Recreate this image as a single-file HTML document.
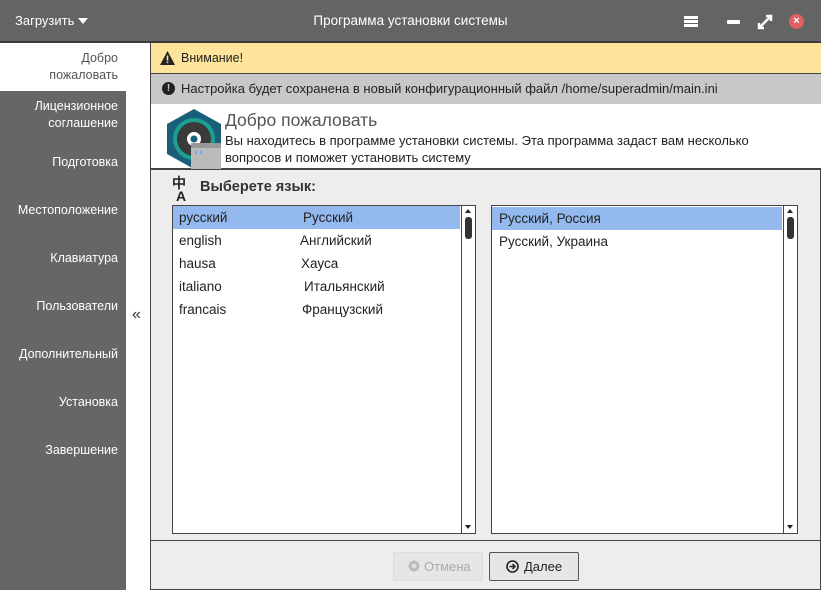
<!DOCTYPE html><html><head><meta charset="utf-8"><style>
*{margin:0;padding:0;box-sizing:border-box}
body{width:821px;height:590px;position:relative;background:#ededed;font-family:"Liberation Sans",sans-serif;font-size:13px;color:#222;overflow:hidden}
.abs{position:absolute}
#title{left:0;top:0;width:821px;height:43px;background:#646464;border-bottom:2px solid #3a3a3a;color:#fff}
#side{left:0;top:43px;width:126px;height:547px;background:#666}
.si{position:absolute;right:8px;width:118px;text-align:right;color:#fff;font-size:12.5px;line-height:17px}
#col{left:126px;top:43px;width:24px;height:547px;background:#fff}
#main{left:150px;top:43px;width:671px;height:547px;border-left:1px solid #444;border-right:1px solid #444;border-bottom:1px solid #444}
.list{background:#fff;border:1px solid #444}
.row{position:absolute;left:0;height:23px;line-height:23px;font-size:13.5px}
.sb{position:absolute;right:0;top:0;bottom:0;width:14px;border-left:1px solid #444;background:#fff}
</style></head><body>
<div id="title" class="abs">
 <div class="abs" style="left:15px;top:13px;font-size:13px">Загрузить</div>
 <div class="abs" style="left:78px;top:18px;border:5px solid transparent;border-top:6px solid #fff;border-bottom:0"></div>
 <div class="abs" style="left:0;width:821px;top:13px;text-align:center;font-size:13.5px">Программа установки системы</div>
 <div class="abs" style="left:684px;top:16px;width:14px;height:3px;background:#fff;box-shadow:0 4px 0 #fff,0 8px 0 #fff"></div>
 <div class="abs" style="left:727px;top:20px;width:13px;height:4px;background:#fff;border-radius:1px"></div>
 <svg class="abs" style="left:757px;top:14px" width="16" height="16"><path d="M2 14L14 2M9 2H14V7M2 9V14H7" stroke="#fff" stroke-width="2.5" fill="none"/></svg>
 <div class="abs" style="left:789px;top:14px;width:15px;height:15px;border-radius:50%;background:#e06060;color:#fff;font-size:11px;line-height:15px;text-align:center;font-weight:bold">×</div>
</div>
<div id="side" class="abs">
 <div class="abs" style="left:0;top:0;width:126px;height:48px;background:#fff"></div>
 <div class="si" style="top:7px;color:#555">Добро<br>пожаловать</div>
 <div class="si" style="top:55px">Лицензионное<br>соглашение</div>
 <div class="si" style="top:111px">Подготовка</div>
 <div class="si" style="top:159px">Местоположение</div>
 <div class="si" style="top:207px">Клавиатура</div>
 <div class="si" style="top:255px">Пользователи</div>
 <div class="si" style="top:303px">Дополнительный</div>
 <div class="si" style="top:351px">Установка</div>
 <div class="si" style="top:399px">Завершение</div>
</div>
<div id="col" class="abs"><div class="abs" style="left:6px;top:263px;font-size:16px;color:#333">«</div></div>
<div id="main" class="abs">
 <div class="abs" style="left:0;top:0;width:670px;height:31px;background:#fde49a;border-bottom:1px solid #444"></div>
 <svg class="abs" style="left:9px;top:8px" width="15" height="14"><path d="M7.5 0L15 14H0Z" fill="#222"/><rect x="6.7" y="4.5" width="1.6" height="5" fill="#fde49a"/><rect x="6.7" y="10.5" width="1.6" height="1.6" fill="#fde49a"/></svg>
 <div class="abs" style="left:30px;top:8px;font-size:12.5px">Внимание!</div>
 <div class="abs" style="left:0;top:31px;width:670px;height:30px;background:#c8c8c8"></div>
 <div class="abs" style="left:11px;top:39px;width:13px;height:13px;border-radius:50%;background:#222;color:#c8c8c8;font-size:10px;font-weight:bold;text-align:center;line-height:13px">!</div>
 <div class="abs" style="left:30px;top:38px;font-size:13px">Настройка будет сохранена в новый конфигурационный файл /home/superadmin/main.ini</div>
 <div class="abs" style="left:0;top:61px;width:670px;height:66px;background:#fff;border-bottom:2px solid #444"></div>
 <svg class="abs" style="left:14px;top:64px" width="58" height="64"><path d="M29 2L56 17V47L29 62L2 47V17Z" fill="#1a5f7a"/><circle cx="29" cy="32" r="21" fill="#1aa090"/><circle cx="29" cy="32" r="17" fill="#3a3a3a"/><circle cx="29" cy="32" r="7" fill="#fff"/><circle cx="29" cy="32" r="3.5" fill="#1a5f7a"/><rect x="26" y="36" width="30" height="26" fill="#bbb"/><rect x="26" y="36" width="30" height="5" fill="#999"/><rect x="30" y="44" width="2" height="3" fill="#6af"/><rect x="35" y="44" width="2" height="3" fill="#6af"/></svg>
 <div class="abs" style="left:74px;top:67px;font-size:17.5px;color:#555">Добро пожаловать</div>
 <div class="abs" style="left:74px;top:89px;font-size:13px;line-height:17px">Вы находитесь в программе установки системы. Эта программа задаст вам несколько<br>вопросов и поможет установить систему</div>
 <div class="abs" style="left:21px;top:134px;font-size:14px;font-weight:bold;line-height:13px">中<br><span style="margin-left:4px">A</span></div>
 <div class="abs" style="left:49px;top:136px;font-size:14.5px;font-weight:bold;color:#333">Выберете язык:</div>
 <div class="abs list" style="left:21px;top:162px;width:304px;height:329px">
  <div class="row" style="top:0;width:287px;background:#93b9ef"><span class="abs" style="left:6px">русский</span><span class="abs" style="left:130px">Русский</span></div>
  <div class="row" style="top:23px"><span class="abs" style="left:6px">english</span><span class="abs" style="left:127px;white-space:nowrap">Английский</span></div>
  <div class="row" style="top:46px"><span class="abs" style="left:6px">hausa</span><span class="abs" style="left:128px">Хауса</span></div>
  <div class="row" style="top:69px"><span class="abs" style="left:6px">italiano</span><span class="abs" style="left:131px;white-space:nowrap">Итальянский</span></div>
  <div class="row" style="top:92px"><span class="abs" style="left:6px">francais</span><span class="abs" style="left:129px;white-space:nowrap">Французский</span></div>
  <div class="sb"><div class="abs" style="left:3px;top:3px;border:3px solid transparent;border-bottom:4px solid #222;border-top:0"></div><div class="abs" style="left:3px;top:11px;width:7px;height:22px;background:#333;border-radius:3px"></div><div class="abs" style="left:3px;bottom:4px;border:3px solid transparent;border-top:4px solid #222;border-bottom:0"></div></div>
 </div>
 <div class="abs list" style="left:340px;top:162px;width:307px;height:329px">
  <div class="row" style="top:1px;width:290px;background:#93b9ef"><span class="abs" style="left:7px">Русский, Россия</span></div>
  <div class="row" style="top:24px"><span class="abs" style="left:7px;white-space:nowrap">Русский, Украина</span></div>
  <div class="sb"><div class="abs" style="left:3px;top:3px;border:3px solid transparent;border-bottom:4px solid #222;border-top:0"></div><div class="abs" style="left:3px;top:11px;width:7px;height:22px;background:#333;border-radius:3px"></div><div class="abs" style="left:3px;bottom:4px;border:3px solid transparent;border-top:4px solid #222;border-bottom:0"></div></div>
 </div>
 <div class="abs" style="left:0;top:497px;width:670px;height:1px;background:#444"></div>
 <div class="abs" style="left:242px;top:509px;width:90px;height:29px;border:1px solid #ddd;background:#e6e6e6;color:#aaa;border-radius:2px;font-size:13px;line-height:27px;padding-left:14px"><svg width="12" height="12" style="vertical-align:-1px;margin-right:4px"><circle cx="6" cy="6" r="5.5" fill="#bbb"/><path d="M4 4L8 8M8 4L4 8" stroke="#e6e6e6" stroke-width="1.5"/></svg>Отмена</div>
 <div class="abs" style="left:338px;top:509px;width:90px;height:29px;border:1px solid #555;background:#e6e6e6;border-radius:2px;font-size:13px;line-height:27px;padding-left:16px"><svg width="13" height="13" style="vertical-align:-2px;margin-right:5px"><circle cx="6.5" cy="6.5" r="5.5" fill="none" stroke="#222" stroke-width="1.6"/><path d="M3.5 6.5H9M6.5 4L9 6.5L6.5 9" stroke="#222" stroke-width="1.5" fill="none"/></svg>Далее</div>
</div>
</body></html>
